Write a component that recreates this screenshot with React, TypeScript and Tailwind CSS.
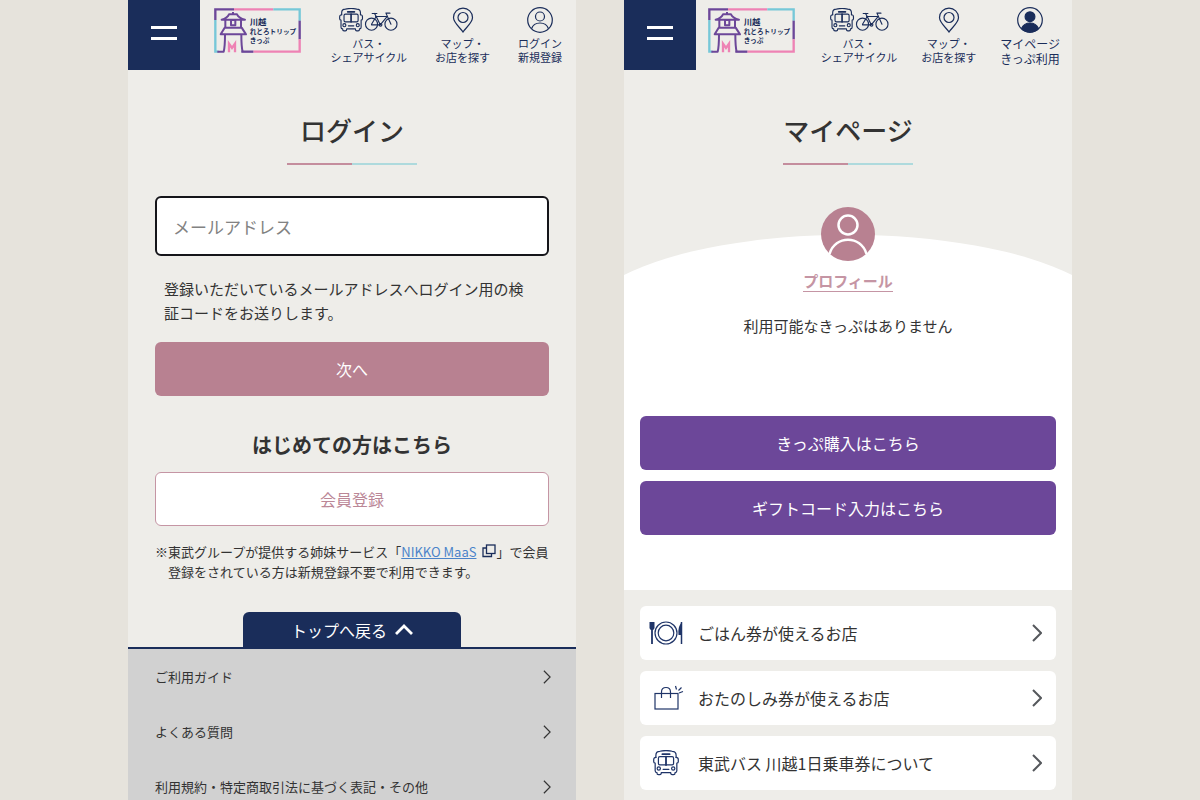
import React from 'react';

interface NavItem {
  id: string;
  icon: React.ReactNode;
  lines: [string, string];
  textClass: string;
}

const FOOTER_LINKS = ['ご利用ガイド', 'よくある質問', '利用規約・特定商取引法に基づく表記・その他'];

const BusShape: React.FC = () => (
  <g fill="none" stroke="currentColor" strokeWidth="3.4" strokeLinejoin="round" strokeLinecap="round">
    <path d="M8 20 V14 Q8 3 19 3 Q36 -1 53 3 Q64 3 64 14 V20" />
    <path d="M8 20 Q2 20 2 26 V32 Q2 36 6 36 V57 Q6 62 11 62 V64 Q11 68 15 68 H19 Q23 68 23 62 H49 Q49 68 53 68 H57 Q61 68 61 64 V62 Q66 62 66 57 V36 Q70 36 70 32 V26 Q70 20 64 20" />
    <path d="M26 11 H46" strokeWidth="5" />
    <rect x="15" y="18" width="42" height="23" rx="4" />
    <path d="M36 18 V41" strokeWidth="5" />
    <circle cx="16" cy="51" r="4.5" />
    <circle cx="56" cy="51" r="4.5" />
    <path d="M28 53 H44" />
  </g>
);

const BusBicycleIcon: React.FC = () => (
  <svg viewBox="0 0 176 71" className="h-6 w-[59px]" aria-hidden="true">
    <BusShape />
    <g transform="translate(78 0)" fill="none" stroke="currentColor" strokeWidth="3.4" strokeLinejoin="round" strokeLinecap="round">
      <circle cx="19" cy="48" r="18" />
      <circle cx="77" cy="48" r="18" />
      <path d="M19 48 L33 25 L45 50 L66 25 H31 M45 50 H19" />
      <path d="M33 25 L28 16 M21 16 H35" />
      <path d="M77 48 L62 15 H74" />
      <circle cx="46" cy="50" r="4" />
    </g>
  </svg>
);

const BusIcon: React.FC = () => (
  <svg viewBox="0 0 72 71" className="h-[26px] w-[26px]" aria-hidden="true">
    <BusShape />
  </svg>
);

const PinIcon: React.FC = () => (
  <svg viewBox="0 0 22 26" className="h-[26px] w-[22px]" fill="none" stroke="currentColor" strokeWidth="1.2" aria-hidden="true">
    <path d="M11 25 C9 21.500 1.500 16 1.500 10.500 A9.500 9.300 0 0 1 20.500 10.500 C20.500 16 13 21.500 11 25 Z" />
    <circle cx="11" cy="10.500" r="5" />
  </svg>
);

const UserIcon: React.FC<{ filled?: boolean }> = ({ filled }) => (
  <svg viewBox="0 0 26 26" className="h-[26px] w-[26px]" fill="none" stroke="currentColor" strokeWidth="1.2" aria-hidden="true">
    <circle cx="13" cy="13" r="12.300" />
    {filled ? (
      <path
        d="M13 4.800 A4.900 4.900 0 1 1 13 14.600 A4.900 4.900 0 1 1 13 4.800 Z M4.500 21.500 Q7 16 13 16 Q19 16 21.500 21.500 Q18 25 13 25 Q8 25 4.500 21.500 Z"
        fill="currentColor"
      />
    ) : (
      <>
        <circle cx="13" cy="9.500" r="4.500" />
        <path d="M4.500 21.800 Q6.500 16 13 16 Q19.500 16 21.500 21.800" />
      </>
    )}
  </svg>
);

const PlateIcon: React.FC = () => (
  <svg viewBox="0 0 34 24" className="h-6 w-[34px]" fill="none" stroke="currentColor" strokeWidth="1.2" aria-hidden="true">
    <circle cx="17" cy="12" r="11" />
    <circle cx="17" cy="12" r="7.800" />
    <path d="M.5 1 V7 Q.5 9 3 9 Q5.500 9 5.500 7 V1 Z" fill="currentColor" stroke="none" />
    <path d="M3 8 V23" strokeWidth="1.800" />
    <path d="M32.500 1 V23" strokeWidth="1.500" />
    <path d="M33 1 Q28.500 5 29.500 14 H33 Z" fill="currentColor" stroke="none" />
  </svg>
);

const BagIcon: React.FC = () => (
  <svg viewBox="-5 0 36 26" className="h-[26px] w-9" fill="none" stroke="currentColor" strokeWidth="1.2" aria-hidden="true">
    <rect x="2" y="8.500" width="23" height="15.500" />
    <path d="M8.500 13 V7 Q8.500 2.500 13 2.500 Q17.500 2.500 17.500 7 V13" />
    <path d="M23.500 4.500 L22.500 1 M25.500 5.500 L28.500 2.500 M26 8 L30 6.500" />
  </svg>
);

const ArrowRight: React.FC<{ className: string }> = ({ className }) => (
  <svg viewBox="0 0 10 18" className={className} fill="none" stroke="currentColor" aria-hidden="true">
    <path d="M1 1 L9 9 L1 17" />
  </svg>
);

const Logo: React.FC = () => (
  <svg viewBox="258 24 261 135" className="h-[45px] w-[87px]" fill="none" strokeWidth="7" role="img" aria-label="川越れとろトリップきっぷ">
    <path d="M262 60 V28 H318" stroke="#6c4799" />
    <path d="M318 28 H436" stroke="#ee82b4" />
    <path d="M436 28 H515 V62" stroke="#76c8d8" />
    <path d="M515 62 V118" stroke="#6c4799" />
    <path d="M515 118 V155 H376" stroke="#ee82b4" />
    <path d="M376 155 H340" stroke="#6c4799" />
    <path d="M262 60 V155 H272" stroke="#76c8d8" />
    <g stroke="#6c4799" strokeWidth="6" strokeLinejoin="round">
      <path d="M315 36 V43 M281 59 Q298 54 303 43 H327 Q332 54 351 59 Z" />
      <path d="M292 60 V82 M339 60 V82" />
      <rect x="309" y="60" width="13" height="16" />
      <path d="M290 83 H341 L354 103 H278 Z" />
      <path d="M291 104 Q291 140 287 155 H268 M340 104 Q340 140 344 155" />
    </g>
    <path d="M303 157 V131 L312 144 L321 131 V157" stroke="#ee82b4" strokeWidth="7" />
    <g fill="#1a2d5a" className="font-['Noto_Sans_CJK_JP',sans-serif] font-bold">
      <text x="365" y="75" fontSize="25">川越</text>
      <text x="365" y="102" fontSize="20">れとろトリップ</text>
      <text x="365" y="130" fontSize="20">きっぷ</text>
    </g>
  </svg>
);

const Header: React.FC<{ items: NavItem[]; navClass: string; logoClass: string }> = ({ items, navClass, logoClass }) => (
  <header className="flex h-[70px] items-start text-[#1a2d5a]">
    <button
      type="button"
      aria-label="メニュー"
      className="flex h-[70px] w-[72px] shrink-0 flex-col items-center justify-center gap-2 bg-[#1a2d5a] pb-1"
    >
      <span className="h-[3px] w-[26px] bg-white" />
      <span className="h-[3px] w-[26px] bg-white" />
    </button>
    <a href="#home" className={logoClass}>
      <Logo />
    </a>
    <nav className={navClass}>
      {items.map((item) => (
        <a key={item.id} href={`#${item.id}`} className="flex flex-col items-center gap-[3px] whitespace-nowrap">
          <span className="flex h-[26px] items-center">{item.icon}</span>
          <span className={item.textClass}>
            <span className="block">{item.lines[0]}</span>
            <span className="block">{item.lines[1]}</span>
          </span>
        </a>
      ))}
    </nav>
  </header>
);

const PageTitle: React.FC<{ children: React.ReactNode }> = ({ children }) => (
  <div className="flex flex-col items-center gap-[13px] pt-10">
    <h1 className="text-[26px] leading-10 font-medium">{children}</h1>
    <div className="flex h-0.5 w-[130px]">
      <span className="flex-1 bg-[#c48d9d]" />
      <span className="flex-1 bg-[#aedadd]" />
    </div>
  </div>
);

const busItem: NavItem = {
  id: 'cycle',
  icon: <BusBicycleIcon />,
  lines: ['バス・', 'シェアサイクル'],
  textClass: 'text-center text-[11px] leading-[14px]',
};

const mapItem: NavItem = {
  id: 'map',
  icon: <PinIcon />,
  lines: ['マップ・', 'お店を探す'],
  textClass: 'text-center text-[11px] leading-[14px]',
};

const LOGIN_NAV: NavItem[] = [
  busItem,
  mapItem,
  { id: 'login', icon: <UserIcon />, lines: ['ログイン', '新規登録'], textClass: 'text-center text-[11px] leading-[14px]' },
];

const MYPAGE_NAV: NavItem[] = [
  busItem,
  mapItem,
  { id: 'mypage', icon: <UserIcon filled />, lines: ['マイページ', 'きっぷ利用'], textClass: 'text-center text-xs leading-[15px]' },
];

const SHOP_LINKS = [
  { id: 'food', label: 'ごはん券が使えるお店', icon: <PlateIcon /> },
  { id: 'fun', label: 'おたのしみ券が使えるお店', icon: <BagIcon /> },
  { id: 'bus', label: '東武バス 川越1日乗車券について', icon: <BusIcon /> },
];

const LoginScreen: React.FC = () => (
  <section className="min-w-0 bg-[#eeede9]">
    <Header items={LOGIN_NAV} navClass="ml-auto flex gap-7 pt-[7px] pr-3.5" logoClass="mt-2 ml-3.5 shrink-0" />
    <PageTitle>ログイン</PageTitle>

    <form className="px-[27px] pt-[31px]" onSubmit={(e) => e.preventDefault()}>
      <input
        type="email"
        aria-label="メールアドレス"
        placeholder="メールアドレス"
        className="block h-[60px] w-full rounded-md border-2 border-[#15151a] bg-white px-4 text-[17px] outline-none placeholder:text-[#828282]"
      />
      <p className="pt-[21px] pr-4 pl-[9px] text-[15px] leading-6">
        登録いただいているメールアドレスへログイン用の検証コードをお送りします。
      </p>
      <button type="submit" className="mt-[17px] h-[54px] w-full rounded-md bg-[#b88191] text-white">
        次へ
      </button>
    </form>

    <div className="px-[27px] pt-[33px]">
      <h2 className="text-center text-[20px] leading-8 font-bold">はじめての方はこちら</h2>
      <button type="button" className="mt-[11px] h-[54px] w-full rounded-md border border-[#c595a4] bg-white text-[#bb8797]">
        会員登録
      </button>
      <div className="-mr-1 flex pt-4 text-[13px] leading-5">
        <span>※</span>
        <p>
          東武グループが提供する姉妹サービス「
          <a href="#nikko" className="text-[#4a83c9] underline">
            NIKKO MaaS
          </a>
          <svg viewBox="0 0 14 14" className="ml-1.5 inline-block h-3.5 w-3.5 align-[-1px] text-[#1a2d5a]" fill="none" stroke="currentColor" strokeWidth="1.300" aria-hidden="true">
            <rect x="4.500" y="1" width="8.500" height="8.500" />
            <path d="M4.500 4 H1 V12.500 H9.500 V9.500" />
          </svg>
          」で会員登録をされている方は新規登録不要で利用できます。
        </p>
      </div>
    </div>

    <div className="mt-[30px] flex justify-center border-b-2 border-[#1a2d5a]">
      <a href="#top" className="flex h-[35px] w-[218px] items-center justify-center gap-2 rounded-t-md bg-[#1a2d5a] text-white">
        トップへ戻る
        <svg viewBox="0 0 18 11" className="h-[11px] w-[18px]" fill="none" stroke="currentColor" strokeWidth="2.800" aria-hidden="true">
          <path d="M1 10 L9 2 L17 10" />
        </svg>
      </a>
    </div>
    <footer className="bg-[#d1d1d1]">
      {FOOTER_LINKS.map((label) => (
        <a key={label} href="#guide" className="flex h-[55px] items-center justify-between pr-6 pl-[27px] text-[13px]">
          {label}
          <ArrowRight className="h-3.5 w-2.5 stroke-[1.5]" />
        </a>
      ))}
    </footer>
  </section>
);

const MyPageScreen: React.FC = () => (
  <section className="min-w-0 bg-[#eeede9]">
    <Header items={MYPAGE_NAV} navClass="ml-auto flex gap-6 pt-[7px] pr-3" logoClass="mt-2 ml-3 shrink-0" />
    <PageTitle>マイページ</PageTitle>

    {/* Curved top edge of the white area */}
    <svg viewBox="0 0 448 40" preserveAspectRatio="none" className="mt-[70px] block h-10 w-full" aria-hidden="true">
      <path d="M0 40 A269 90 0 0 1 448 40 Z" fill="#fff" />
    </svg>
    <div className="flex flex-col bg-white px-4 pb-[55px]">
      {/* The avatar sits across the curve */}
      <div className="relative -mt-[68px] flex flex-col items-center">
        <svg viewBox="0 0 54 54" className="h-[54px] w-[54px]" fill="none" stroke="#fff" strokeWidth="2.500" aria-hidden="true">
          <circle cx="27" cy="27" r="27" fill="#b88191" stroke="none" />
          <circle cx="27" cy="18" r="9.500" />
          <path d="M8.500 47 C14 28 40 28 45.500 47" />
        </svg>
        <a href="#profile" className="mt-2.5 border-b border-[#c595a4] text-[15px] leading-5 font-bold text-[#c595a4]">
          プロフィール
        </a>
        <p className="pt-[22px] text-[15px] leading-6">利用可能なきっぷはありません</p>
      </div>
      <div className="flex flex-col gap-[11px] pt-[78px] text-white">
        <button type="button" className="h-[54px] rounded-md bg-[#6c4799]">
          きっぷ購入はこちら
        </button>
        <button type="button" className="h-[54px] rounded-md bg-[#6c4799]">
          ギフトコード入力はこちら
        </button>
      </div>
    </div>

    <ul className="flex flex-col gap-[11px] px-4 pt-4">
      {SHOP_LINKS.map((link) => (
        <li key={link.id}>
          <a href={`#${link.id}`} className="flex h-[54px] items-center rounded-md bg-white pr-3.5 pl-2">
            <span className="flex w-9 justify-center text-[#1f3468]">{link.icon}</span>
            <span className="ml-3.5 flex-1">{link.label}</span>
            <ArrowRight className="h-[18px] w-2.5 stroke-2 text-[#55585c]" />
          </a>
        </li>
      ))}
    </ul>
  </section>
);

export default function App() {
  return (
    <main className="grid h-screen grid-cols-2 gap-12 overflow-hidden bg-[#e6e3dc] px-32 font-['Noto_Sans_CJK_JP',sans-serif] text-base text-[#333333]">
      <LoginScreen />
      <MyPageScreen />
    </main>
  );
}
